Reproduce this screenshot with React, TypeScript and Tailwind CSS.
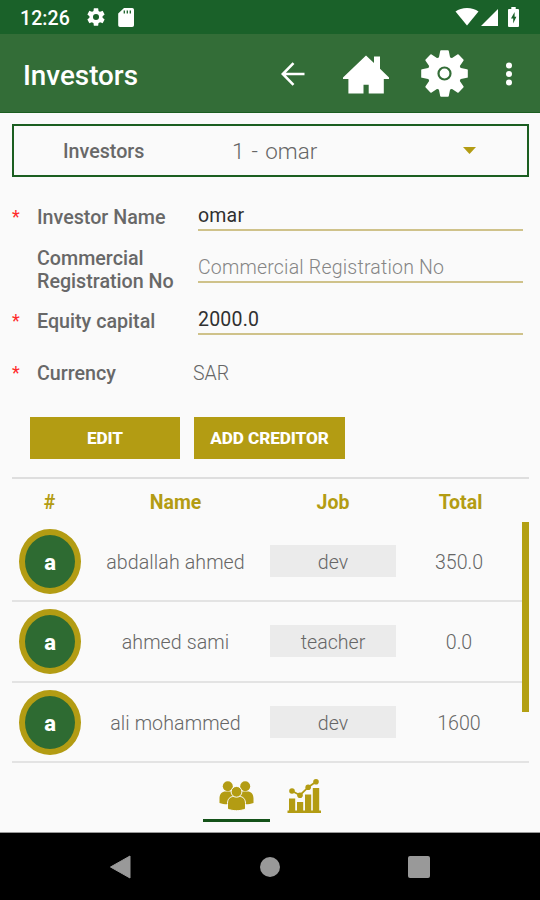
const creditors = [
  { name: "abdallah ahmed", job: "dev", total: "350.0" },
  { name: "ahmed sami", job: "teacher", total: "0.0" },
  { name: "ali mohammed", job: "dev", total: "1600" },
];

const COG =
  "M19.14 12.94c.04-.3.06-.61.06-.94s-.02-.64-.07-.94l2.03-1.58a.49.49 0 0 0 .12-.61l-1.92-3.32a.488.488 0 0 0-.59-.22l-2.39.96c-.5-.38-1.03-.7-1.62-.94l-.36-2.54a.484.484 0 0 0-.48-.41h-3.84c-.24 0-.43.17-.47.41l-.36 2.54c-.59.24-1.13.57-1.62.94l-2.39-.96c-.22-.08-.47 0-.59.22L2.74 8.87c-.12.21-.08.47.12.61l2.03 1.58c-.05.3-.09.63-.09.94s.02.64.07.94l-2.03 1.58a.49.49 0 0 0-.12.61l1.92 3.32c.12.22.37.29.59.22l2.39-.96c.5.38 1.03.7 1.62.94l.36 2.54c.05.24.24.41.48.41h3.84c.24 0 .44-.17.47-.41l.36-2.54c.59-.24 1.13-.56 1.62-.94l2.39.96c.22.08.47 0 .59-.22l1.92-3.32c.12-.22.07-.47-.12-.61l-2.01-1.58zM12 15.3A3.3 3.3 0 1 1 12 8.7a3.3 3.3 0 0 1 0 6.6z";

const TOOTH = "M-6-14-4.300-22.500q.1-.8.9-.8h6.800q.8 0 .9.800L6-14V14L4.300 22.500q-.1.800-.9.800h-6.800q-.8 0-.9-.8L-6 14z";

function StatusBar() {
  return (
    <div className="flex h-[34px] items-center bg-[#1a6129] pl-5 pr-[21px] text-white">
      <span className="mt-[3px] w-[64px] whitespace-nowrap text-[19.5px] font-medium leading-none tracking-[0.1px]">12:26</span>
      <svg className="ml-px h-[22px] w-[22px]" viewBox="0 0 24 24" fill="currentColor">
        <path d={COG} />
      </svg>
      <svg className="ml-[11px] h-[19px] w-4" viewBox="0 0 16 19">
        <path d="M6 0h8.200A1.800 1.800 0 0 1 16 1.800v15.400a1.800 1.800 0 0 1-1.800 1.800H2A1.800 1.800 0 0 1 .2 17.200V5.600z" fill="#fff" />
        <path d="M6.300 2.500v3M9.300 2.500v3M12.300 2.500v3" stroke="#1a6129" strokeWidth="1.300" />
      </svg>
      <svg className="ml-auto h-[18px] w-[24px]" viewBox="0 0 24 18" fill="currentColor">
        <path d="M12 17.500.500 3.500C3.500 1.300 7.500 0 12 0s8.500 1.300 11.500 3.500z" />
      </svg>
      <svg className="ml-[2px] mt-px h-[17px] w-[17px]" viewBox="0 0 17 17" fill="currentColor">
        <path d="M0 17 17 0v17z" />
      </svg>
      <svg className="ml-[10px] h-5 w-[11px]" viewBox="0 0 11 20">
        <path d="M3.300 0h4.400v2H10a1 1 0 0 1 1 1v16a1 1 0 0 1-1 1H1a1 1 0 0 1-1-1V3a1 1 0 0 1 1-1h2.300z" fill="#fff" />
        <path d="M6.600 5 3 11.500h2.200V16.500L8.400 9.800H6.600z" fill="#1a6129" />
      </svg>
    </div>
  );
}

function AppBar() {
  return (
    <div className="flex h-[79px] items-center border-b border-[#1b5e20] bg-[#336d37] pl-[23px] pr-[27px] text-white">
      <h1 className="mt-[5px] text-[27.800px] font-medium leading-none">Investors</h1>
      <svg className="ml-auto mt-px h-6 w-6" viewBox="0 0 24 24" fill="none" stroke="currentColor" strokeWidth="2.600">
        <path d="M23.500 12H2.500M12.500 1.200 1.800 12l10.700 10.800" />
      </svg>
      <svg className="ml-[38px] mt-[3px] h-10 w-[46px]" viewBox="0 0 46 40" fill="currentColor">
        <path d="M23 .500 31 8V1.500h6v12.200L46 22.500V24h-5.200v14.500H25.700v-8.700h-5.200v8.700H5.400V24H0v-1.500z" />
      </svg>
      <svg className="ml-[32px] mt-px h-[47px] w-[47px]" viewBox="-23.500 -23.500 47 47" fill="currentColor">
        <circle r="17" />
        <path d={TOOTH} />
        <path transform="rotate(45)" d={TOOTH} />
        <path transform="rotate(90)" d={TOOTH} />
        <path transform="rotate(135)" d={TOOTH} />
        <circle r="6" fill="none" stroke="#336d37" strokeWidth="2.200" />
      </svg>
      <svg className="ml-[37px] mt-px h-6 w-2" viewBox="0 0 8 24" fill="currentColor">
        <circle cx="4" cy="3.500" r="3" />
        <circle cx="4" cy="12" r="3" />
        <circle cx="4" cy="20.500" r="3" />
      </svg>
    </div>
  );
}

function Label({ text, required }: { text: string; required?: boolean }) {
  return (
    <div className="flex w-[186px] shrink-0 items-center">
      <span className="w-[25px] shrink-0 text-[18px] leading-none text-[#ff2a2a]">{required ? "*" : ""}</span>
      <span className="mt-px text-[19.700px] font-medium leading-[23px] text-[#686868]">{text}</span>
    </div>
  );
}

function Field({ label, value, placeholder, required }: { label: string; value?: string; placeholder?: string; required?: boolean }) {
  return (
    <div className="flex h-[52px] items-center">
      <Label text={label} required={required} />
      <div className="flex h-[27px] flex-1 items-start border-b-2 border-[#cfc28a]">
        {value ? (
          <span className="mt-0.5 text-[19.500px] leading-[20px] tracking-[0.2px] text-[#303030]">{value}</span>
        ) : (
          <span className="mt-0.5 text-[19.500px] font-light leading-[20px] tracking-[0.2px] text-[#858585]">{placeholder}</span>
        )}
      </div>
    </div>
  );
}

function CreditorRow({ name, job, total }: { name: string; job: string; total: string }) {
  return (
    <div className="flex h-[80.300px] items-center border-b-2 border-[#e3e3e3] text-[19.600px] font-light text-[#666]">
      <div className="ml-[7px] mt-px flex h-[65px] w-[62px] items-center justify-center rounded-[50%] border-[6px] border-[#b39c13] bg-[#2e6b32] text-[22px] font-extrabold text-white">
        <span className="mt-0.5">a</span>
      </div>
      <div className="ml-[7px] mt-[3px] w-[175px] text-center tracking-[0.1px]">{name}</div>
      <div className="ml-[7px] flex h-8 w-[126px] items-center justify-center bg-[#ebebeb] pt-[3px]">{job}</div>
      <div className="mt-[3px] w-[126px] text-center">{total}</div>
    </div>
  );
}

export default function App() {
  return (
    <div className="flex h-[900px] w-[540px] flex-col overflow-hidden bg-[#fafafa] font-['Roboto',sans-serif]">
      <StatusBar />
      <AppBar />

      <main className="flex flex-1 flex-col pl-3 pr-[11px] pt-[11px]">
        {/* Investor picker */}
        <div className="flex h-[53px] items-center border-2 border-[#1b5e20]">
          <span className="ml-[49px] mt-[3px] w-[169px] text-[19.700px] font-medium text-[#686868]">Investors</span>
          <span className="mt-0.5 text-[22.400px] font-light tracking-[0.1px] text-[#666] [word-spacing:1.5px]">1 - omar</span>
          <svg className="ml-auto mr-[51px] h-[7px] w-[13px]" viewBox="0 0 13 7">
            <path d="M0 0h13L6.500 7z" fill="#b39c13" />
          </svg>
        </div>

        {/* Form */}
        <div className="mt-[14px] pr-1.5">
          <Field label="Investor Name" value="omar" required />
          <Field label="Commercial Registration No" placeholder="Commercial Registration No" />
          <Field label="Equity capital" value="2000.0" required />
          <div className="flex h-[52px] items-center">
            <Label text="Currency" required />
            <span className="-ml-[5px] mt-0.5 text-[19.500px] font-light text-[#666]">SAR</span>
          </div>
        </div>

        <div className="ml-[18px] mt-[18px] flex gap-[14px]">
          <button className="h-[42px] w-[150px] bg-[#b39c13] pt-0.5 text-[17.200px] font-extrabold tracking-[-0.100px] text-white">EDIT</button>
          <button className="h-[42px] w-[151px] bg-[#b39c13] pt-0.5 text-[17.200px] font-extrabold tracking-[-0.100px] text-white">ADD CREDITOR</button>
        </div>

        {/* Creditors */}
        <div className="mt-[18px] flex h-[45px] items-center border-t-2 border-[#dedede] pt-1 text-[19.500px] font-bold text-[#b39c13]">
          <span className="w-[75px] text-center">#</span>
          <span className="w-[177px] text-center">Name</span>
          <span className="w-[138px] text-center">Job</span>
          <span className="w-[117px] text-center">Total</span>
        </div>
        <div className="relative">
          {creditors.map((c) => (
            <CreditorRow key={c.name} {...c} />
          ))}
          <div className="absolute right-0 top-0 h-[190px] w-[7px] bg-[#b3a013]" />
        </div>

        {/* Tabs */}
        <div className="ml-[191px] flex items-start">
          <div className="flex h-[59px] w-[67px] flex-col items-center justify-end border-b-[3px] border-[#145219] pb-2">
            <svg className="h-[30px] w-[35px]" viewBox="0 0 35 30" fill="#b39c13">
              <circle cx="8.800" cy="5.300" r="5" />
              <circle cx="26.200" cy="5.300" r="5" />
              <path d="M.500 22v-4.500c0-4.500 2.500-7 6-7H13l4 11c-5 2.200-11.500 2.200-16.500.500zM34.500 22v-4.500c0-4.500-2.500-7-6-7H22l-4 11c5 2.200 11.500 2.200 16.500.500z" />
              <g stroke="#fafafa" strokeWidth="1">
                <path d="M8.500 28v-5.500c0-4.500 2.500-7 6-7h6c3.500 0 6 2.500 6 7V28c-5.500 2.300-12.500 2.300-18 0z" />
                <circle cx="17.500" cy="10.800" r="5.400" />
              </g>
            </svg>
          </div>
          <svg className="ml-[17px] mt-[16px] h-[34px] w-[34px]" viewBox="0 0 34 34" fill="#b39c13">
            <path d="M.500 31.500h33.500V34H.500zM2 19.500h6.200v13H2zM10 23h6.200v9H10zM18 15.500h6.200v17H18zM25.800 9h6.400v23h-6.400z" />
            <path d="m5 12 8 4.200 8.200-8L29 2.800" fill="none" stroke="#b39c13" strokeWidth="1.800" />
            <circle cx="5" cy="12" r="2.800" />
            <circle cx="13" cy="16.200" r="2.800" />
            <circle cx="21.200" cy="8.200" r="2.800" />
            <circle cx="29" cy="2.800" r="2.800" />
          </svg>
        </div>
      </main>

      <nav className="flex h-[68px] items-center border-t border-[#999] bg-black pl-[109px] pr-[110px]">
        <svg className="h-6 w-[22px]" viewBox="0 0 22 24">
          <path d="M1.500 12 21 1v22z" fill="#999" stroke="#999" strokeLinejoin="round" />
        </svg>
        <div className="ml-[129px] h-5 w-5 rounded-full bg-[#999]" />
        <div className="ml-auto h-[22px] w-[22px] rounded-[2px] bg-[#999]" />
      </nav>
    </div>
  );
}
